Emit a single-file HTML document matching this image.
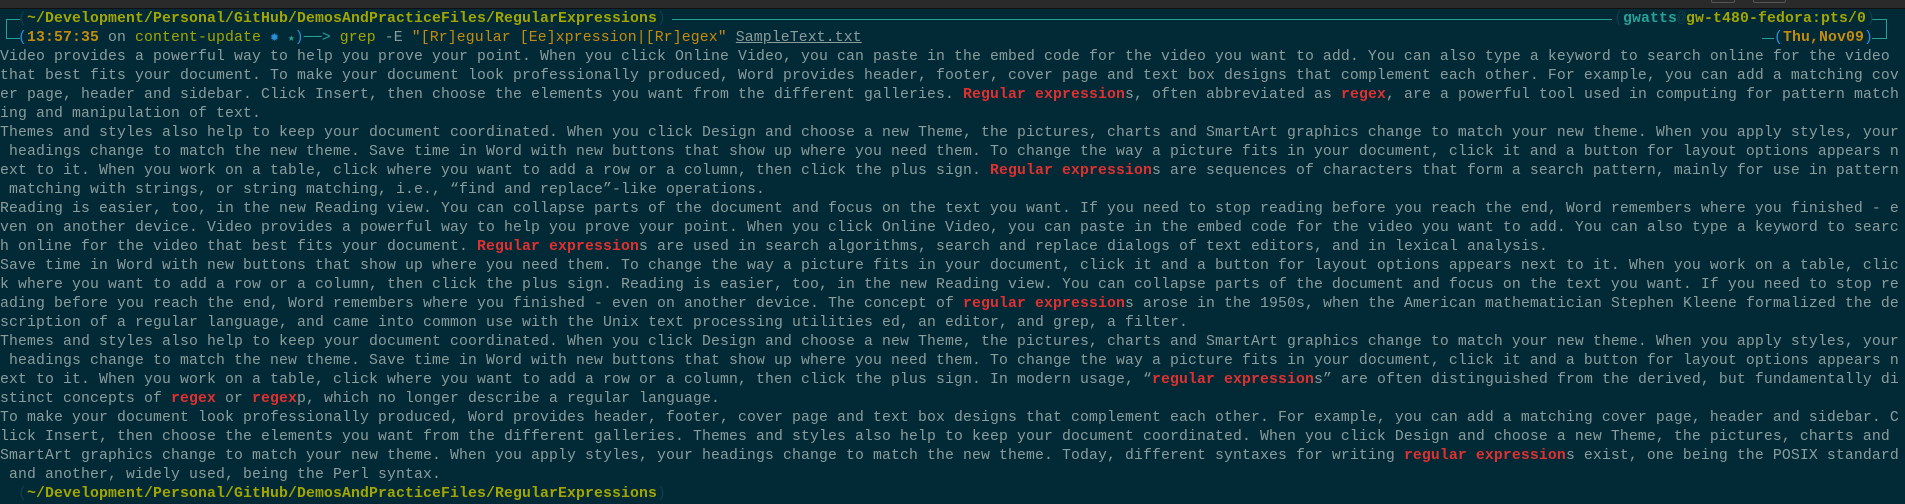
<!DOCTYPE html>
<html><head><meta charset="utf-8"><style>
html,body{margin:0;padding:0;}
body{width:1905px;height:489px;overflow:hidden;background:#022a36;position:relative;font-family:"Liberation Mono","DejaVu Sans Mono",monospace;font-size:14.8px;letter-spacing:0.12px;color:#8b9c9c;}
.bar{position:absolute;left:0;top:0;width:1905px;height:8px;background:#2a2a2a;border-bottom:1px solid #111;}
.tab{position:absolute;top:-2px;height:3px;border:1px solid #555;border-radius:2px;}
.term{position:absolute;left:0;top:10px;}
.l{height:19px;line-height:19px;white-space:pre;}
.r{color:#e03030;font-weight:bold;}
.y{color:#a3a600;}
.o{color:#c58c0c;}
.b{color:#2b8fd6;}
.t{color:#27a197;}
.d{color:#0e3f4c;}
.u{text-decoration:underline;}
.hl{position:absolute;height:0;border-top:1.5px solid #27a197;}
.vl{position:absolute;width:0;border-left:1.5px solid #27a197;}
.abs{position:absolute;white-space:pre;line-height:19px;}
</style></head><body>
<div class="bar"><div class="tab" style="left:1711px;width:22px"></div><div class="tab" style="left:1753px;width:31px"></div></div>

<div class="vl" style="left:6px;top:19px;height:19px"></div>
<div class="hl" style="left:6px;top:19px;width:14px"></div>
<div class="hl" style="left:6px;top:38px;width:14px"></div>
<div class="hl" style="left:672px;top:19px;width:940px"></div>
<div class="hl" style="left:1872px;top:19px;width:15px"></div>
<div class="vl" style="left:1886px;top:19px;height:19px"></div>
<div class="hl" style="left:1872px;top:38px;width:15px"></div>
<div class="hl" style="left:1762px;top:38px;width:12px"></div>
<div class="abs" style="left:1614px;top:10px"><span class="d">(</span><span class="t" style="font-weight:bold">gwatts</span><span class="d">@</span><span class="y" style="font-weight:bold">gw-t480-fedora:pts/0</span><span class="d">)</span></div>
<div class="abs" style="left:1774px;top:29px"><span class="b">(</span><span class="o" style="font-weight:bold">Thu,Nov09</span><span class="b">)</span></div>

<div class="term">
<div class="l">  <span class="d">(</span><span class="y" style="font-weight:bold">~/Development/Personal/GitHub/DemosAndPracticeFiles/RegularExpressions</span><span class="d">)</span></div>
<div class="l">  <span class="b">(</span><span class="o" style="font-weight:bold">13:57:35</span> on <span class="y">content-update</span> <span class="b">✹</span> <span class="t" style="font-size:11px">★</span><span class="b">)</span><span class="t">──&gt;</span> <span class="y">grep</span> -E <span class="o">"[Rr]egular [Ee]xpression|[Rr]egex"</span> <span class="u">SampleText.txt</span></div>
<div class="l">Video provides a powerful way to help you prove your point. When you click Online Video, you can paste in the embed code for the video you want to add. You can also type a keyword to search online for the video</div>
<div class="l">that best fits your document. To make your document look professionally produced, Word provides header, footer, cover page and text box designs that complement each other. For example, you can add a matching cov</div>
<div class="l">er page, header and sidebar. Click Insert, then choose the elements you want from the different galleries. <span class="r">Regular expression</span>s, often abbreviated as <span class="r">regex</span>, are a powerful tool used in computing for pattern match</div>
<div class="l">ing and manipulation of text.</div>
<div class="l">Themes and styles also help to keep your document coordinated. When you click Design and choose a new Theme, the pictures, charts and SmartArt graphics change to match your new theme. When you apply styles, your</div>
<div class="l"> headings change to match the new theme. Save time in Word with new buttons that show up where you need them. To change the way a picture fits in your document, click it and a button for layout options appears n</div>
<div class="l">ext to it. When you work on a table, click where you want to add a row or a column, then click the plus sign. <span class="r">Regular expression</span>s are sequences of characters that form a search pattern, mainly for use in pattern</div>
<div class="l"> matching with strings, or string matching, i.e., “find and replace”-like operations.</div>
<div class="l">Reading is easier, too, in the new Reading view. You can collapse parts of the document and focus on the text you want. If you need to stop reading before you reach the end, Word remembers where you finished - e</div>
<div class="l">ven on another device. Video provides a powerful way to help you prove your point. When you click Online Video, you can paste in the embed code for the video you want to add. You can also type a keyword to searc</div>
<div class="l">h online for the video that best fits your document. <span class="r">Regular expression</span>s are used in search algorithms, search and replace dialogs of text editors, and in lexical analysis.</div>
<div class="l">Save time in Word with new buttons that show up where you need them. To change the way a picture fits in your document, click it and a button for layout options appears next to it. When you work on a table, clic</div>
<div class="l">k where you want to add a row or a column, then click the plus sign. Reading is easier, too, in the new Reading view. You can collapse parts of the document and focus on the text you want. If you need to stop re</div>
<div class="l">ading before you reach the end, Word remembers where you finished - even on another device. The concept of <span class="r">regular expression</span>s arose in the 1950s, when the American mathematician Stephen Kleene formalized the de</div>
<div class="l">scription of a regular language, and came into common use with the Unix text processing utilities ed, an editor, and grep, a filter.</div>
<div class="l">Themes and styles also help to keep your document coordinated. When you click Design and choose a new Theme, the pictures, charts and SmartArt graphics change to match your new theme. When you apply styles, your</div>
<div class="l"> headings change to match the new theme. Save time in Word with new buttons that show up where you need them. To change the way a picture fits in your document, click it and a button for layout options appears n</div>
<div class="l">ext to it. When you work on a table, click where you want to add a row or a column, then click the plus sign. In modern usage, “<span class="r">regular expression</span>s” are often distinguished from the derived, but fundamentally di</div>
<div class="l">stinct concepts of <span class="r">regex</span> or <span class="r">regex</span>p, which no longer describe a regular language.</div>
<div class="l">To make your document look professionally produced, Word provides header, footer, cover page and text box designs that complement each other. For example, you can add a matching cover page, header and sidebar. C</div>
<div class="l">lick Insert, then choose the elements you want from the different galleries. Themes and styles also help to keep your document coordinated. When you click Design and choose a new Theme, the pictures, charts and</div>
<div class="l">SmartArt graphics change to match your new theme. When you apply styles, your headings change to match the new theme. Today, different syntaxes for writing <span class="r">regular expression</span>s exist, one being the POSIX standard</div>
<div class="l"> and another, widely used, being the Perl syntax.</div>
<div class="l">  <span class="d">(</span><span class="y" style="font-weight:bold">~/Development/Personal/GitHub/DemosAndPracticeFiles/RegularExpressions</span><span class="d">)</span></div>
</div>
</body></html>
